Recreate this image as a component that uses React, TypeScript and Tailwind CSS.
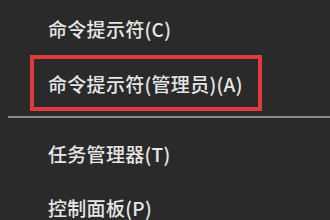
import React from 'react';

const font = { fontFamily: '"Noto Sans CJK SC", "Noto Sans", sans-serif' };

export default function App() {
    return (
        <div className="w-[330px] h-[220px] overflow-hidden bg-[#2a2a2a] text-[#e6e6e6] text-[19px] leading-none font-medium tracking-[0.3px]" style={font}>
            <div className="pt-[1px]">
                <div className="h-[54px] flex items-center pl-[48px]">命令提示符(C)</div>
                <div className="ml-[30px] w-[232px] h-[56px] border-[4px] border-[#e03a3e] flex items-center pl-[14px]">
                    命令提示符(管理员)(A)
                </div>
                <div className="ml-[8px] mt-[5px] h-[2px] bg-[#8a8a8a]" />
                <div className="mt-[8px] h-[54px] flex items-center pl-[48px]">任务管理器(T)</div>
                <div className="h-[54px] flex items-center pl-[48px]">控制面板(P)</div>
            </div>
        </div>
    );
}
